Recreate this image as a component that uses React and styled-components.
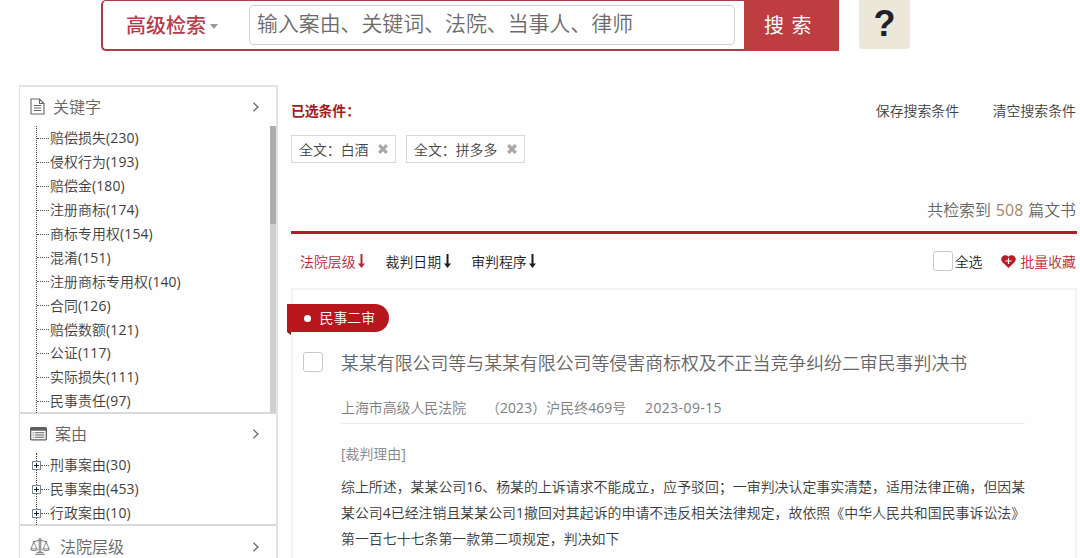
import React from "react";
import styled, { createGlobalStyle } from "styled-components";

const GlobalStyle = createGlobalStyle`
  * { box-sizing: border-box; }
  body {
    margin: 0;
    background: #fefefe;
    color: #3c3c3c;
    font-family: "Open Sans", "Noto Sans CJK SC", sans-serif;
    font-size: 13.9px;
    font-weight: 350;
  }
`;

const Page = styled.div`
  width: 1080px;
  height: 558px;
  overflow: hidden;
  display: flex;
  flex-direction: column;
`;

/* Digits and brackets sit one weight above the Chinese text */
const Latin = styled.span`
  font-weight: 400;
`;

/* Header */
const Header = styled.header`
  display: flex;
  flex-shrink: 0;
  align-items: flex-start;
  height: 85px;
  padding-left: 101px;
`;
const SearchBar = styled.div`
  display: flex;
  width: 738px;
  height: 51px;
  border: 2px solid #a93d45;
  border-top-width: 1px;
  border-right: 0;
  border-radius: 5px 0 0 5px;
  background: #fff;
`;
const ModeSelect = styled.div`
  display: flex;
  align-items: center;
  width: 146px;
  padding: 0 0 1px 23px;
  color: #b93b49;
  font-size: 20px;
  font-weight: 500;
`;
const Caret = styled.span`
  margin: 4px 0 0 4px;
  border: 4px solid transparent;
  border-top: 5px solid #999;
  border-bottom: 0;
`;
const SearchInput = styled.div`
  width: 486px;
  height: 40px;
  margin-top: 4px;
  padding-left: 7px;
  border: 1px solid #d2d2d4;
  border-radius: 4px;
  color: #6b6b6b;
  font-size: 20.9px;
  line-height: 35px;
  white-space: nowrap;
`;
const SearchButton = styled.div`
  width: 95px;
  height: 51px;
  margin: -1px 0 0 9px;
  padding-left: 20px;
  background: #bd3d41;
  color: #fff;
  font-size: 20px;
  font-weight: 400;
  line-height: 51px;
  word-spacing: 2.3px;
  white-space: nowrap;
`;
const HelpButton = styled.div`
  width: 51px;
  height: 49px;
  margin-left: 20px;
  border-radius: 0 0 4px 4px;
  background: #ece8d9;
  color: #211f2b;
  font-family: "Liberation Sans", sans-serif;
  font-size: 36px;
  font-weight: 700;
  line-height: 48px;
  text-align: center;
`;

const Body = styled.div`
  display: flex;
  align-items: flex-start;
  padding-left: 19px;
`;

/* Sidebar */
const Sidebar = styled.aside`
  width: 259px;
  height: 473px;
  border: 2px solid #e2e2e2;
  border-width: 2px 2px 0 1px;
`;
const Panel = styled.section`
  height: ${(p) => p.$height}px;
  border-bottom: 2px solid #dadada;
`;
const PanelHead = styled.div`
  display: flex;
  align-items: center;
  height: ${(p) => p.$height}px;
  padding: 0 16px 0 10px;
  color: #666;
  font-size: 16px;
  svg:last-child { margin-left: auto; }
`;
const PanelTitle = styled.span`
  margin-left: ${(p) => p.$gap}px;
  line-height: 24px;
`;
const Scroller = styled.div`
  display: flex;
  height: 287px;
  overflow: hidden;
`;
const Tree = styled.div`
  flex: 1;
  margin-left: 16px;
  border-left: 1px dotted #444;
`;
const TreeRow = styled.div`
  display: flex;
  align-items: center;
  height: 23.9px;
  color: #3d3d3d;
  letter-spacing: 0.13px;
  white-space: nowrap;
`;
const TreeLabel = styled.span`
  padding-bottom: 1px;
`;
const Branch = styled.span`
  width: ${(p) => (p.$short ? 8 : 12)}px;
  margin: 1px 1px 0 0;
  border-top: 1px dotted #555;
`;
const Expander = styled.span`
  display: flex;
  width: 9px;
  height: 9px;
  margin: 1px 0 0 -5px;
  background: #fff;
  svg { display: block; }
`;
const Track = styled.div`
  width: 6px;
  background: #cfcfcf;
`;
const Thumb = styled.div`
  height: 98px;
  background: #adadad;
`;

/* Results */
const Main = styled.main`
  width: 786px;
  margin-left: 13px;
`;
const ConditionBar = styled.div`
  display: flex;
  align-items: center;
  height: 50px;
  padding-right: 1px;
`;
const ConditionTitle = styled.strong`
  margin-right: auto;
  color: #a51a22;
  letter-spacing: -0.1px;
`;
const TextAction = styled.span`
  margin-left: 33.5px;
  color: #404040;
`;
const Tags = styled.div`
  display: flex;
  gap: 10px;
`;
const Tag = styled.div`
  display: flex;
  align-items: center;
  justify-content: space-between;
  width: ${(p) => p.$width}px;
  height: 28px;
  padding: 0 7px;
  border: 1px solid #d8d8d8;
  color: #444;
`;
const Total = styled.div`
  height: 71px;
  padding: 35px 1px 0 0;
  border-bottom: 3px solid #a82127;
  color: #666;
  font-size: 15.9px;
  line-height: 24px;
  text-align: right;
  word-spacing: 0.8px;
`;
const Count = styled(Latin)`
  color: #a9835f;
  letter-spacing: 0.1px;
`;
const Toolbar = styled.div`
  display: flex;
  align-items: center;
  height: 54px;
  padding: 0 1px 0 9px;
`;
const SortOption = styled.span`
  display: flex;
  align-items: center;
  gap: 2.5px;
  margin-right: 20.5px;
  color: ${(p) => (p.$active ? "#b52833" : "#1d1d1d")};
`;
const SelectAll = styled.label`
  display: flex;
  align-items: center;
  gap: 2px;
  margin-left: auto;
  color: #262626;
`;
const Checkbox = styled.span`
  width: 20px;
  height: 20px;
  border: 1px solid #c9c9cc;
  border-radius: 3px;
  background: #fff;
`;
const Favorite = styled.span`
  display: flex;
  align-items: center;
  gap: 4px;
  margin-left: 19px;
  color: #bd2733;
`;
const Card = styled.article`
  height: 280px;
  padding-top: 14px;
  border: 2px solid #f3f3f3;
  border-bottom: 0;
`;
const Ribbon = styled.div`
  display: flex;
  align-items: center;
  position: relative;
  width: 102px;
  height: 28px;
  margin-left: -6px;
  padding-left: 16.5px;
  border-radius: 0 14px 14px 0;
  background: #b6161c;
  color: #fff;
  &::after {
    content: "";
    position: absolute;
    left: 0;
    top: 28px;
    border-top: 3px solid #8e1015;
    border-left: 4px solid transparent;
  }
`;
const RibbonLabel = styled.span`
  padding-bottom: 2px;
`;
const Dot = styled.i`
  width: 7px;
  height: 7px;
  margin-right: 9px;
  border-radius: 50%;
  background: #fff;
`;
const TitleRow = styled.div`
  display: flex;
  align-items: center;
  gap: 18px;
  height: 60px;
  padding-left: 10px;
`;
const CaseTitle = styled.h2`
  margin: 0;
  color: #666;
  font-size: 17.9px;
  font-weight: 350;
  white-space: nowrap;
`;
const CaseBody = styled.div`
  width: 684px;
  margin-left: 48px;
`;
const Meta = styled.div`
  display: flex;
  height: 32px;
  padding-top: 5px;
  border-bottom: 1px solid #ececec;
  color: #7c7c7c;
  line-height: 22px;
  white-space: nowrap;
`;
const MetaItem = styled.span`
  width: ${(p) => p.$width}px;
  letter-spacing: ${(p) => p.$spacing || 0}px;
`;
const ReasonLabel = styled.div`
  margin-top: 18px;
  color: #868686;
  line-height: 24px;
`;
const Reason = styled.p`
  margin: 8px 0 0;
  color: #3a3a3a;
  letter-spacing: 0.03px;
  line-height: 26px;
  white-space: nowrap;
`;

const Mixed = ({ text }) =>
  text.split(/([0-9()[\]-]+)/).map((part, i) => (i % 2 ? <Latin key={i}>{part}</Latin> : part));

const Chevron = () => (
  <svg width="8" height="10" viewBox="0 0 8 10" fill="none" stroke="#666" strokeWidth="1.3">
    <path d="M1.5 .8 6 5 1.5 9.2" />
  </svg>
);
const DocIcon = () => (
  <svg width="15" height="17" viewBox="0 0 15 17" fill="none" stroke="#666" strokeWidth="1.1">
    <path d="M1 1h8.5L14 5.5V16H1zM9.5 1v4.5H14M4 7.5h7.2M4 10h7.2M4 12.5h7.2" />
  </svg>
);
const ListIcon = () => (
  <svg width="17" height="14" viewBox="0 0 16 14" preserveAspectRatio="none" fill="none" stroke="#5f5f5f">
    <rect x=".6" y=".6" width="14.8" height="12.3" rx="1" strokeWidth="1.2" />
    <path d="M.6 2.2h14.8" strokeWidth="3" />
    <path d="M2.5 5.7h1M4.5 5.7h9M2.5 8h1M4.5 8h9M2.5 10.3h1M4.5 10.3h9" />
  </svg>
);
const ScalesIcon = () => (
  <svg width="20" height="17" viewBox="0 0 20 17" fill="none" stroke="#6a6a6a" strokeWidth=".9">
    <path d="M3 3.5C6 3.8 7.5 2.3 10 2.3s4 1.5 7 1.2M9.2 3v11.5M10.8 3v11.5M6.5 14.7h7M5 16.3h10" />
    <circle cx="10" cy="1.6" r="1.1" />
    <path d="M3.7 3.8 1 11M3.7 3.8 6.8 11M16.3 3.8 13.2 11M16.3 3.8 19 11M.5 11h7c-.5 2.3-6.5 2.3-7 0zM12.5 11h7c-.5 2.3-6.5 2.3-7 0z" strokeWidth=".8" />
  </svg>
);
const PlusBox = () => (
  <svg width="9" height="9" viewBox="0 0 9 9" fill="none">
    <rect x=".5" y=".5" width="8" height="8" stroke="#7c8794" />
    <path d="M2 4.5h5M4.5 2v5" stroke="#222" />
  </svg>
);
const CloseIcon = () => (
  <svg width="10" height="10" viewBox="0 0 10 10" stroke="#a8a8a8" strokeWidth="3.2">
    <path d="M1.2 1.2 8.8 8.8M8.8 1.2 1.2 8.8" />
  </svg>
);
const SortArrow = () => (
  <svg width="7" height="14" viewBox="0 0 7 14" fill="currentColor">
    <path d="M2.5 0h2v9.5H7L3.5 14 0 9.5h2.5z" />
  </svg>
);
const HeartIcon = () => (
  <svg width="15" height="13" viewBox="0 0 15 13">
    <path d="M7.5 13 1.3 7C-2 3 3-2.2 7.5 1.7 12-2.2 17 3 13.7 7z" fill="#b81c27" />
    <path d="M7.5 3v6M4.5 6h6" stroke="#fff" strokeWidth="1.2" />
  </svg>
);

const keywords = [
  ["赔偿损失", 230], ["侵权行为", 193], ["赔偿金", 180], ["注册商标", 174],
  ["商标专用权", 154], ["混淆", 151], ["注册商标专用权", 140], ["合同", 126],
  ["赔偿数额", 121], ["公证", 117], ["实际损失", 111], ["民事责任", 97],
];
const causes = [["刑事案由", 30], ["民事案由", 453], ["行政案由", 10]];
const sorts = ["法院层级", "裁判日期", "审判程序"];
const reasonLines = [
  "综上所述，某某公司16、杨某的上诉请求不能成立，应予驳回；一审判决认定事实清楚，适用法律正确，但因某",
  "某公司4已经注销且某某公司1撤回对其起诉的申请不违反相关法律规定，故依照《中华人民共和国民事诉讼法》",
  "第一百七十七条第一款第二项规定，判决如下",
];

export default function App() {
  return (
    <Page>
      <GlobalStyle />
      <Header>
        <SearchBar>
          <ModeSelect>高级检索<Caret /></ModeSelect>
          <SearchInput>输入案由、关键词、法院、当事人、律师</SearchInput>
          <SearchButton>搜 索</SearchButton>
        </SearchBar>
        <HelpButton>?</HelpButton>
      </Header>
      <Body>
        <Sidebar>
          <Panel $height={327}>
            <PanelHead $height={39}>
              <DocIcon /><PanelTitle $gap={8}>关键字</PanelTitle><Chevron />
            </PanelHead>
            <Scroller>
              <Tree>
                {keywords.map(([name, count]) => (
                  <TreeRow key={name}>
                    <Branch /><TreeLabel>{name}<Latin>({count})</Latin></TreeLabel>
                  </TreeRow>
                ))}
              </Tree>
              <Track><Thumb /></Track>
            </Scroller>
          </Panel>
          <Panel $height={112}>
            <PanelHead $height={39}>
              <ListIcon /><PanelTitle $gap={8}>案由</PanelTitle><Chevron />
            </PanelHead>
            <Tree>
              {causes.map(([name, count]) => (
                <TreeRow key={name}>
                  <Expander><PlusBox /></Expander><Branch $short />
                  <TreeLabel>{name}<Latin>({count})</Latin></TreeLabel>
                </TreeRow>
              ))}
            </Tree>
          </Panel>
          <PanelHead $height={41}>
            <ScalesIcon /><PanelTitle $gap={10}>法院层级</PanelTitle><Chevron />
          </PanelHead>
        </Sidebar>
        <Main>
          <ConditionBar>
            <ConditionTitle>已选条件：</ConditionTitle>
            <TextAction>保存搜索条件</TextAction>
            <TextAction>清空搜索条件</TextAction>
          </ConditionBar>
          <Tags>
            <Tag $width={105}>全文：白酒<CloseIcon /></Tag>
            <Tag $width={119}>全文：拼多多<CloseIcon /></Tag>
          </Tags>
          <Total>共检索到 <Count>508</Count> 篇文书</Total>
          <Toolbar>
            {sorts.map((label, i) => (
              <SortOption key={label} $active={i === 0}>{label}<SortArrow /></SortOption>
            ))}
            <SelectAll><Checkbox />全选</SelectAll>
            <Favorite><HeartIcon />批量收藏</Favorite>
          </Toolbar>
          <Card>
            <Ribbon><Dot /><RibbonLabel>民事二审</RibbonLabel></Ribbon>
            <TitleRow>
              <Checkbox />
              <CaseTitle>某某有限公司等与某某有限公司等侵害商标权及不正当竞争纠纷二审民事判决书</CaseTitle>
            </TitleRow>
            <CaseBody>
              <Meta>
                <MetaItem $width={145}>上海市高级人民法院</MetaItem>
                <MetaItem $width={159} $spacing={0.1}><Mixed text="（2023）沪民终469号" /></MetaItem>
                <MetaItem $spacing={0.45}><Mixed text="2023-09-15" /></MetaItem>
              </Meta>
              <ReasonLabel><Mixed text="[裁判理由]" /></ReasonLabel>
              <Reason>
                {reasonLines.map((line) => (
                  <React.Fragment key={line}><Mixed text={line} /><br /></React.Fragment>
                ))}
              </Reason>
            </CaseBody>
          </Card>
        </Main>
      </Body>
    </Page>
  );
}
